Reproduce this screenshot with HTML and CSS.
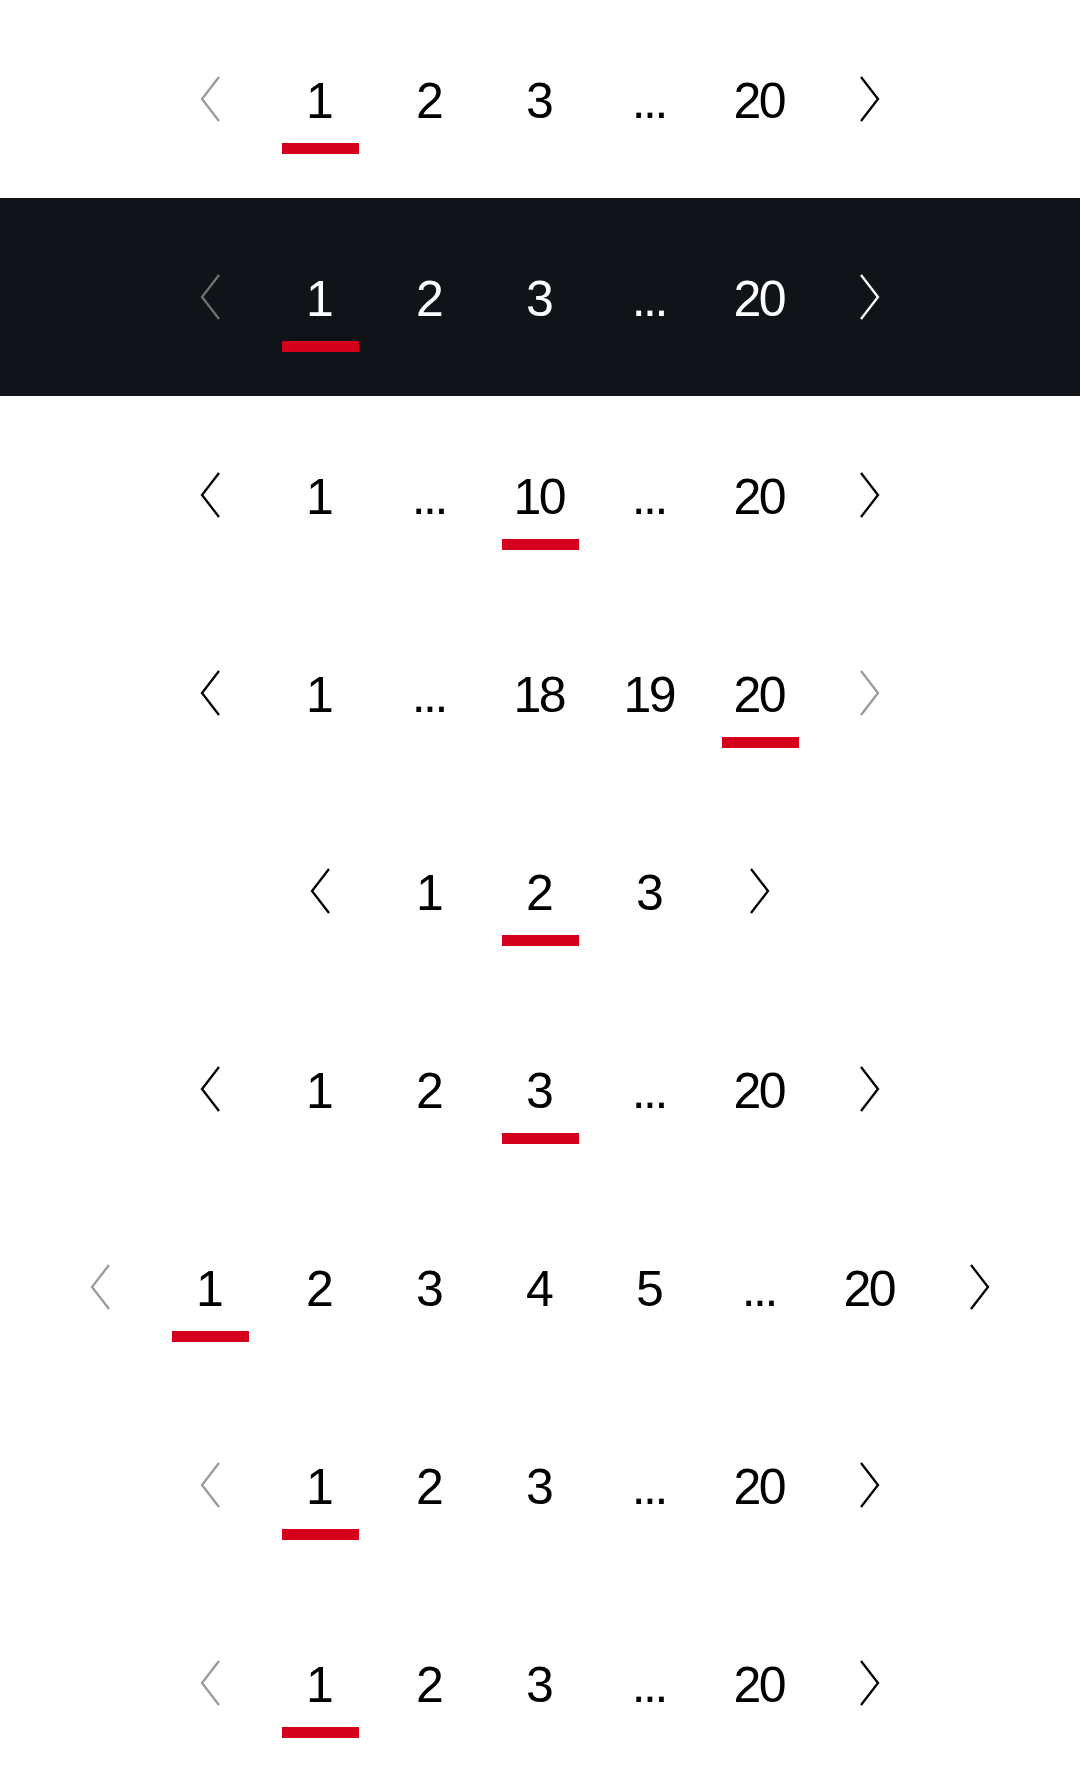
FILE: index.html
```html
<!DOCTYPE html>
<html lang="en">
<head>
<meta charset="utf-8">
<title>Pagination</title>
<link rel="stylesheet" href="styles.css">
</head>
<body>
<main class="page">

  <nav class="pagination">
    <span class="item nav disabled"><svg viewBox="0 0 20 46"><polyline points="19,1 2,23 19,45"/></svg></span>
    <span class="item active"><span class="num">1</span></span>
    <span class="item"><span class="num">2</span></span>
    <span class="item"><span class="num">3</span></span>
    <span class="item"><span class="num">...</span></span>
    <span class="item"><span class="num">20</span></span>
    <span class="item nav"><svg viewBox="0 0 20 46"><polyline points="1,1 18,23 1,45"/></svg></span>
  </nav>

  <nav class="pagination dark">
    <span class="item nav disabled"><svg viewBox="0 0 20 46"><polyline points="19,1 2,23 19,45"/></svg></span>
    <span class="item active"><span class="num">1</span></span>
    <span class="item"><span class="num">2</span></span>
    <span class="item"><span class="num">3</span></span>
    <span class="item"><span class="num">...</span></span>
    <span class="item"><span class="num">20</span></span>
    <span class="item nav"><svg viewBox="0 0 20 46"><polyline points="1,1 18,23 1,45"/></svg></span>
  </nav>

  <nav class="pagination">
    <span class="item nav"><svg viewBox="0 0 20 46"><polyline points="19,1 2,23 19,45"/></svg></span>
    <span class="item"><span class="num">1</span></span>
    <span class="item"><span class="num">...</span></span>
    <span class="item active"><span class="num">10</span></span>
    <span class="item"><span class="num">...</span></span>
    <span class="item"><span class="num">20</span></span>
    <span class="item nav"><svg viewBox="0 0 20 46"><polyline points="1,1 18,23 1,45"/></svg></span>
  </nav>

  <nav class="pagination">
    <span class="item nav"><svg viewBox="0 0 20 46"><polyline points="19,1 2,23 19,45"/></svg></span>
    <span class="item"><span class="num">1</span></span>
    <span class="item"><span class="num">...</span></span>
    <span class="item"><span class="num">18</span></span>
    <span class="item"><span class="num">19</span></span>
    <span class="item active"><span class="num">20</span></span>
    <span class="item nav disabled"><svg viewBox="0 0 20 46"><polyline points="1,1 18,23 1,45"/></svg></span>
  </nav>

  <nav class="pagination">
    <span class="item nav"><svg viewBox="0 0 20 46"><polyline points="19,1 2,23 19,45"/></svg></span>
    <span class="item"><span class="num">1</span></span>
    <span class="item active"><span class="num">2</span></span>
    <span class="item"><span class="num">3</span></span>
    <span class="item nav"><svg viewBox="0 0 20 46"><polyline points="1,1 18,23 1,45"/></svg></span>
  </nav>

  <nav class="pagination">
    <span class="item nav"><svg viewBox="0 0 20 46"><polyline points="19,1 2,23 19,45"/></svg></span>
    <span class="item"><span class="num">1</span></span>
    <span class="item"><span class="num">2</span></span>
    <span class="item active"><span class="num">3</span></span>
    <span class="item"><span class="num">...</span></span>
    <span class="item"><span class="num">20</span></span>
    <span class="item nav"><svg viewBox="0 0 20 46"><polyline points="1,1 18,23 1,45"/></svg></span>
  </nav>

  <nav class="pagination">
    <span class="item nav disabled"><svg viewBox="0 0 20 46"><polyline points="19,1 2,23 19,45"/></svg></span>
    <span class="item active"><span class="num">1</span></span>
    <span class="item"><span class="num">2</span></span>
    <span class="item"><span class="num">3</span></span>
    <span class="item"><span class="num">4</span></span>
    <span class="item"><span class="num">5</span></span>
    <span class="item"><span class="num">...</span></span>
    <span class="item"><span class="num">20</span></span>
    <span class="item nav"><svg viewBox="0 0 20 46"><polyline points="1,1 18,23 1,45"/></svg></span>
  </nav>

  <nav class="pagination">
    <span class="item nav disabled"><svg viewBox="0 0 20 46"><polyline points="19,1 2,23 19,45"/></svg></span>
    <span class="item active"><span class="num">1</span></span>
    <span class="item"><span class="num">2</span></span>
    <span class="item"><span class="num">3</span></span>
    <span class="item"><span class="num">...</span></span>
    <span class="item"><span class="num">20</span></span>
    <span class="item nav"><svg viewBox="0 0 20 46"><polyline points="1,1 18,23 1,45"/></svg></span>
  </nav>

  <nav class="pagination">
    <span class="item nav disabled"><svg viewBox="0 0 20 46"><polyline points="19,1 2,23 19,45"/></svg></span>
    <span class="item active"><span class="num">1</span></span>
    <span class="item"><span class="num">2</span></span>
    <span class="item"><span class="num">3</span></span>
    <span class="item"><span class="num">...</span></span>
    <span class="item"><span class="num">20</span></span>
    <span class="item nav"><svg viewBox="0 0 20 46"><polyline points="1,1 18,23 1,45"/></svg></span>
  </nav>

</main>
</body>
</html>
```

FILE: styles.css
```css
html, body {
  margin: 0;
  padding: 0;
  background: #ffffff;
}

.page {
  display: flex;
  flex-direction: column;
  width: 1080px;
}

.pagination {
  height: 198px;
  box-sizing: border-box;
  padding-top: 76px;
  display: flex;
  justify-content: center;
  align-items: flex-start;
  background: #ffffff;
  color: #000000;
  font-family: "Liberation Sans", Arial, sans-serif;
  font-size: 50px;
  line-height: 50px;
}

.pagination.dark {
  background: #101418;
  color: #ffffff;
}

.item {
  width: 110px;
  display: flex;
  flex-direction: column;
  align-items: center;
}

.num {
  display: block;
  height: 50px;
  letter-spacing: -2.5px;
  padding-right: 2.5px;
  white-space: nowrap;
}

.item.active::after {
  content: "";
  display: block;
  width: 77px;
  height: 11px;
  margin-top: 17px;
  background: #d5001c;
}

.nav svg {
  width: 20px;
  height: 46px;
  display: block;
  fill: none;
  stroke: currentColor;
  stroke-width: 2.3;
}

.nav.disabled {
  color: #9b9b9b;
}

.dark .nav.disabled {
  color: #6f7174;
}
```
